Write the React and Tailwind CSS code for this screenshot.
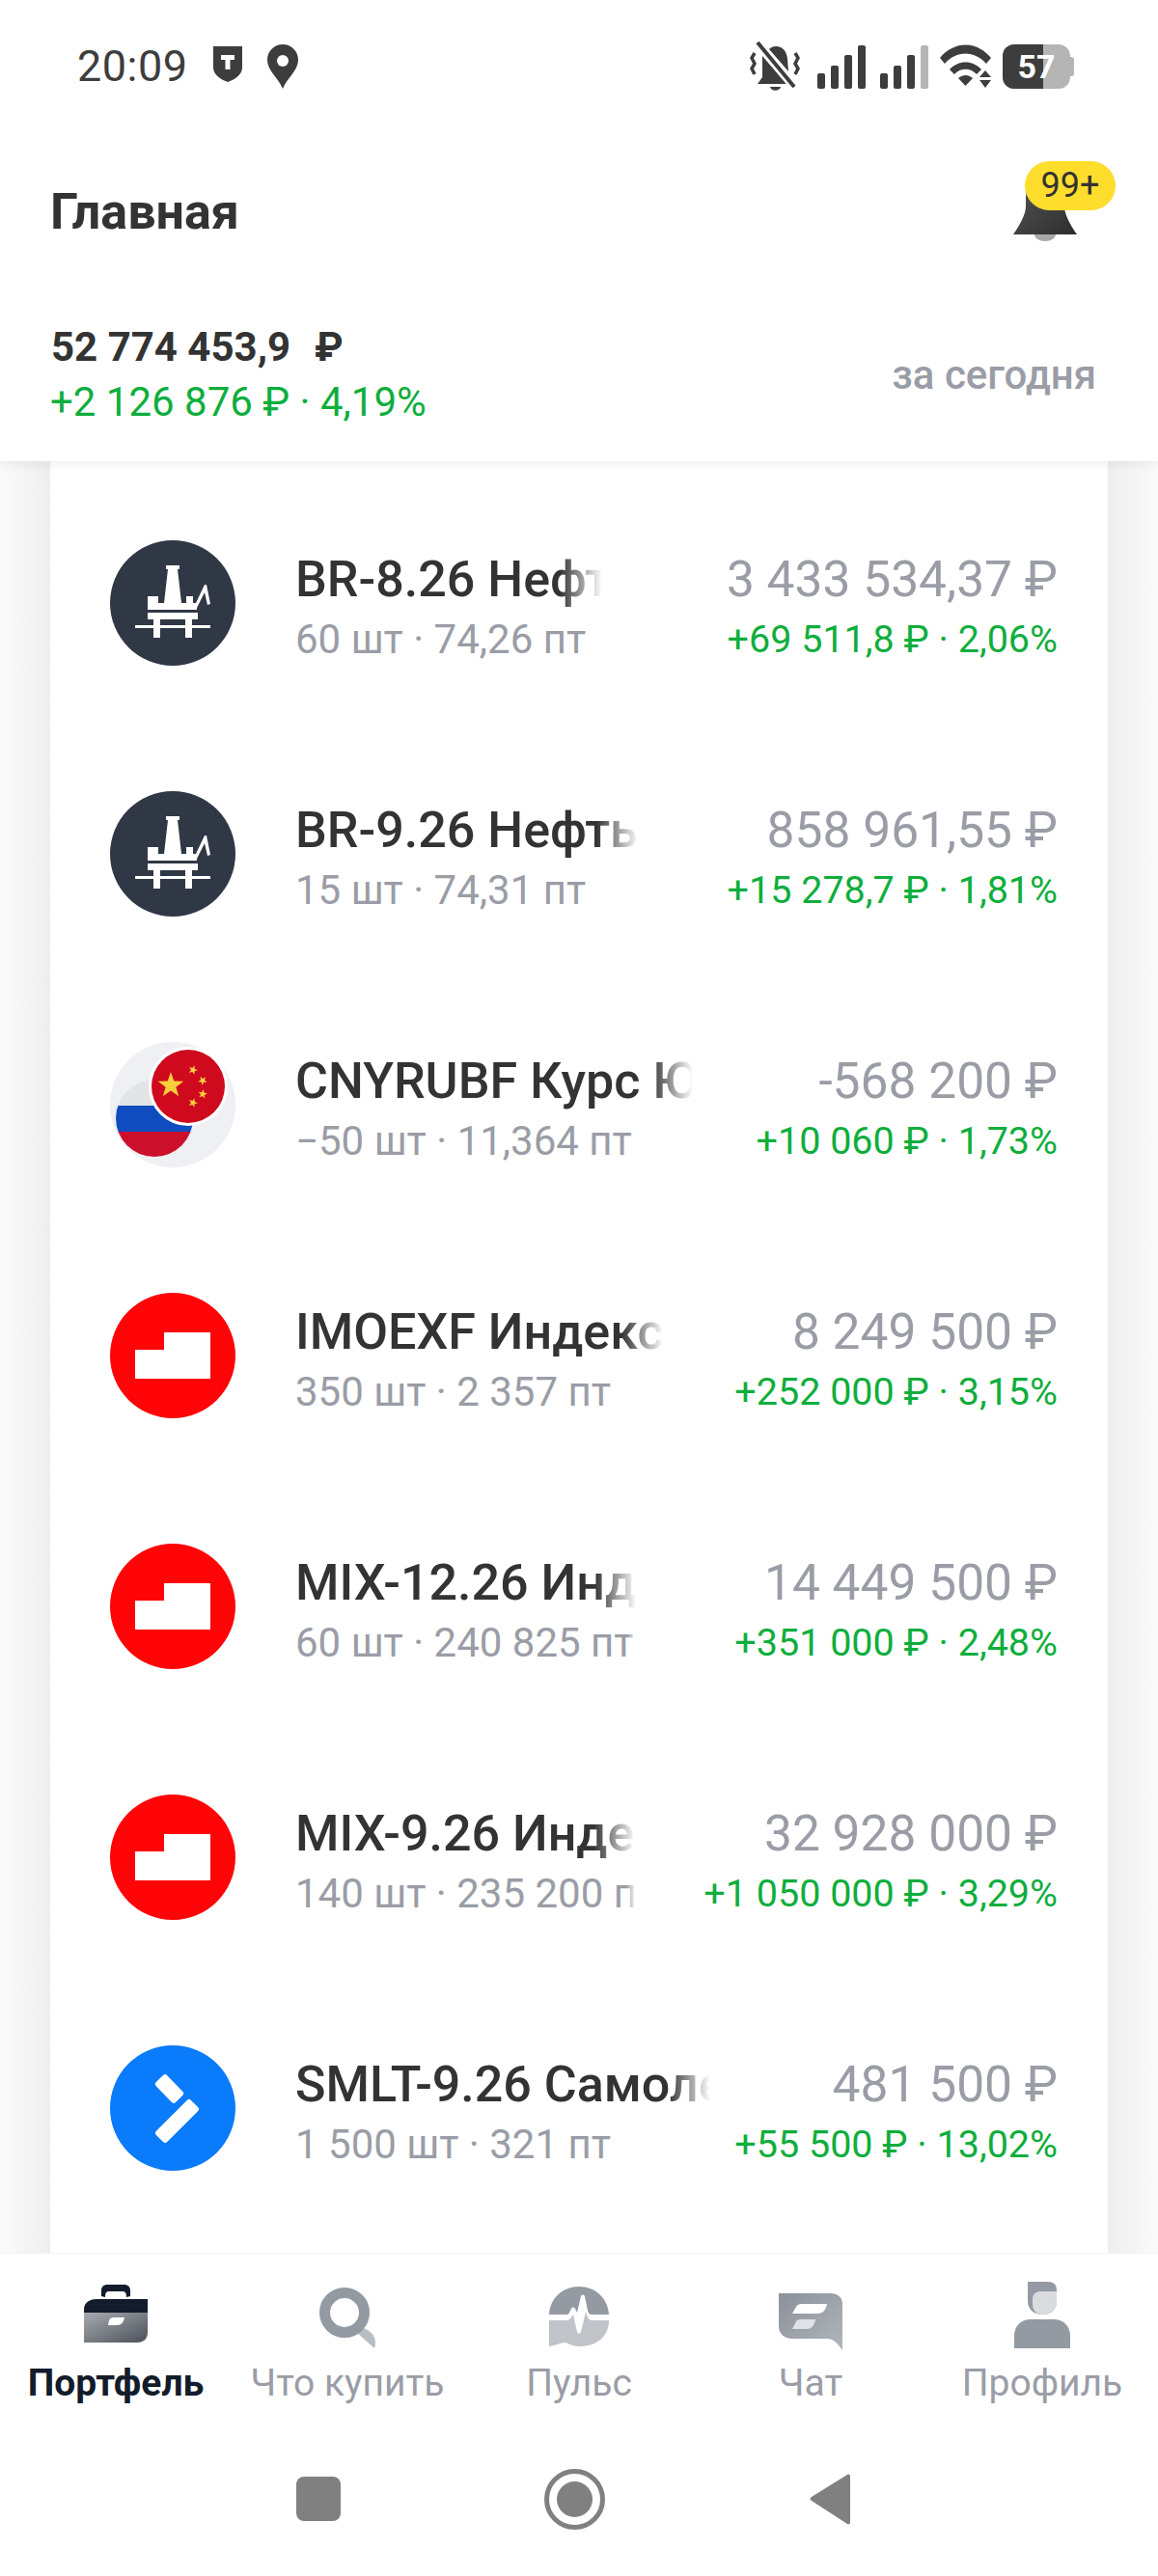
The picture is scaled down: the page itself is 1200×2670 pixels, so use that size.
import React from "react";

const positions = [
  { name: "BR-8.26 Нефть Brent", sub: "60 шт · 74,26 пт", value: "3 433 534,37 ₽", change: "+69 511,8 ₽ · 2,06%", nameW: "w-[318px]", logo: "oil" },
  { name: "BR-9.26 Нефть Brent", sub: "15 шт · 74,31 пт", value: "858 961,55 ₽", change: "+15 278,7 ₽ · 1,81%", nameW: "w-[356px]", logo: "oil" },
  { name: "CNYRUBF Курс Юаня", sub: "−50 шт · 11,364 пт", value: "-568 200 ₽", change: "+10 060 ₽ · 1,73%", nameW: "w-[412px]", logo: "flags" },
  { name: "IMOEXF Индекс МосБиржи", sub: "350 шт · 2 357 пт", value: "8 249 500 ₽", change: "+252 000 ₽ · 3,15%", nameW: "w-[382px]", logo: "moex" },
  { name: "MIX-12.26 Индекс", sub: "60 шт · 240 825 пт", value: "14 449 500 ₽", change: "+351 000 ₽ · 2,48%", nameW: "w-[354px]", logo: "moex" },
  { name: "MIX-9.26 Индекс", sub: "140 шт · 235 200 пт", value: "32 928 000 ₽", change: "+1 050 000 ₽ · 3,29%", nameW: "w-[353px]", logo: "moex" },
  { name: "SMLT-9.26 Самолет", sub: "1 500 шт · 321 пт", value: "481 500 ₽", change: "+55 500 ₽ · 13,02%", nameW: "w-[430px]", logo: "smlt" },
];

function OilLogo() {
  return (
    <svg viewBox="0 0 130 130" className="w-[130px] h-[130px]">
      <circle cx="65" cy="65" r="65" fill="#303846" />
      <path d="M58 26h14v4h-2l4 35h5v-7h7v7h3l9-19 2 0 4 20-3 1-3-13-8 16v2H39V58h11v7h6l4-35h-2z" fill="#fff" />
      <path d="M39 75h52v7H39z" fill="#fff" />
      <path d="M26 88h78v3H26z" fill="#fff" />
      <path d="M45 82h7v19h-7zM78 82h7v19h-7z" fill="#fff" />
    </svg>
  );
}

function Star({ x, y, r, rot = 0 }) {
  const pts = [];
  for (let i = 0; i < 10; i++) {
    const rad = i % 2 === 0 ? r : r * 0.4;
    const a = ((-90 + rot + i * 36) * Math.PI) / 180;
    pts.push(`${(x + rad * Math.cos(a)).toFixed(2)},${(y + rad * Math.sin(a)).toFixed(2)}`);
  }
  return <polygon points={pts.join(" ")} fill="#f7cf3c" />;
}

function FlagsLogo() {
  return (
    <svg viewBox="0 0 130 130" className="w-[130px] h-[130px]">
      <defs>
        <clipPath id="ru">
          <circle cx="46" cy="79" r="40" />
        </clipPath>
      </defs>
      <circle cx="65" cy="65" r="65" fill="#eff0f3" />
      <g clipPath="url(#ru)">
        <rect x="0" y="39" width="100" height="27" fill="#e3e4e6" />
        <rect x="0" y="66" width="100" height="27" fill="#0f4cc0" />
        <rect x="0" y="93" width="100" height="27" fill="#cc0f2b" />
      </g>
      <circle cx="81" cy="46" r="41" fill="#fff" />
      <circle cx="81" cy="46" r="38" fill="#cf0a1e" />
      <Star x={63} y={45} r={14} />
      <Star x={86} y={29} r={5} rot={20} />
      <Star x={96} y={40} r={5} rot={40} />
      <Star x={96} y={54} r={5} rot={10} />
      <Star x={86} y={63} r={5} rot={20} />
    </svg>
  );
}

function MoexLogo() {
  return (
    <svg viewBox="0 0 130 130" className="w-[130px] h-[130px]">
      <circle cx="65" cy="65" r="65" fill="#ff0508" />
      <path d="M26 59h30V41h48v48H26z" fill="#fff" />
    </svg>
  );
}

function SmltLogo() {
  return (
    <svg viewBox="0 0 130 130" className="w-[130px] h-[130px]">
      <circle cx="65" cy="65" r="65" fill="#0a7bfa" />
      <rect x="47" y="37" width="29" height="16" rx="3" transform="rotate(46 61.500 45)" fill="#fff" />
      <rect x="44" y="70.500" width="51" height="16" rx="3" transform="rotate(-45 69.500 78.500)" fill="#fff" />
    </svg>
  );
}

const logos = { oil: OilLogo, flags: FlagsLogo, moex: MoexLogo, smlt: SmltLogo };

function PositionRow({ p }) {
  const Logo = logos[p.logo];
  return (
    <div className="h-[260px] flex items-center pl-[62px] pr-[52px]">
      <Logo />
      <div className={`ml-[62px] pt-[8px] ${p.nameW} overflow-hidden shrink-0`}>
        <div className="relative overflow-hidden">
          <div className="text-[52px] leading-[58px] font-medium text-[#333333] whitespace-nowrap">{p.name}</div>
          <div className="absolute inset-y-0 right-0 w-[44px] bg-gradient-to-r from-white/0 to-white" />
        </div>
        <div className="relative overflow-hidden mt-[9px]">
          <div className="text-[42px] leading-[48px] text-[#9a9da6] whitespace-nowrap">{p.sub}</div>
          <div className="absolute inset-y-0 right-0 w-[10px] bg-gradient-to-r from-white/0 to-white" />
        </div>
      </div>
      <div className="ml-auto pt-[8px] text-right whitespace-nowrap">
        <div className="text-[51.500px] leading-[58px] text-[#9a9da6]">{p.value}</div>
        <div className="text-[39.500px] leading-[48px] mt-[9px] text-[#0fae3c]">{p.change}</div>
      </div>
    </div>
  );
}

function Signal({ className, dim }) {
  return (
    <div className={`flex items-end gap-[6px] h-[46px] ${className}`}>
      <div className="w-[8px] h-[16px] rounded-[2px] bg-[#3d3d3d]" />
      <div className="w-[8px] h-[24px] rounded-[2px] bg-[#3d3d3d]" />
      <div className="w-[8px] h-[35px] rounded-[2px] bg-[#3d3d3d]" />
      <div className={`w-[8px] h-[45px] rounded-[2px] ${dim ? "bg-[#b5b5b5]" : "bg-[#3d3d3d]"}`} />
    </div>
  );
}

function Battery() {
  return (
    <div className="relative ml-[9px] flex items-center">
      <div className="relative w-[70px] h-[46px] rounded-[12px] bg-[#b5b5b5] overflow-hidden">
        <div className="absolute left-0 top-0 bottom-0 w-[42px] bg-[#3d3d3d]" />
      </div>
      <div className="w-[4px] h-[20px] rounded-r-[3px] bg-[#b5b5b5]" />
      <span className="absolute left-0 w-[70px] top-0 text-center text-[34px] leading-[46px] font-bold text-white">57</span>
    </div>
  );
}

function StatusBar() {
  return (
    <div className="h-[140px] flex items-center justify-between pl-[80px] pr-[87px] pb-[2px]">
      <div className="flex items-center">
        <span className="text-[45px] text-[#3d3d3d] tracking-[0.5px]">20:09</span>
        <svg viewBox="0 0 32 44" className="w-[32px] h-[44px] ml-[25px]">
          <path d="M1 1h30v22c0 8-9 13-15 15C10 36 1 31 1 23z" fill="#3d3d3d" />
          <path d="M9 10h14v5h-4.500v10h-5V15H9z" fill="#fff" />
        </svg>
        <svg viewBox="0 0 32 46" className="w-[32px] h-[46px] ml-[25px]">
          <path d="M16 0C7 0 0 7 0 16c0 11 11 18 16 30 5-12 16-19 16-30C32 7 25 0 16 0z" fill="#3d3d3d" />
          <circle cx="16" cy="17" r="6" fill="#fff" />
        </svg>
      </div>
      <div className="flex items-center">
        <svg viewBox="0 0 52 52" className="w-[52px] h-[52px]">
          <path d="M27 5c7 0 11 5 12 13l1 13-20-23c2-2 4-3 7-3zM13 15l25 29H8l5-7z" fill="#3d3d3d" />
          <path d="M21 47h11c-1 5-10 5-11 0z" fill="#3d3d3d" />
          <path d="M6 0l38 46" stroke="#fff" strokeWidth="7" />
          <path d="M8 1l38 46" stroke="#3d3d3d" strokeWidth="4" />
          <path d="M5 12L2 17l3 6-3 5 3 6M47 12l3 5-3 6 3 5-3 6" stroke="#3d3d3d" strokeWidth="3.500" fill="none" />
        </svg>
        <Signal className="ml-[18px]" dim={false} />
        <Signal className="ml-[15px]" dim={true} />
        <svg viewBox="0 0 56 48" className="w-[56px] h-[48px] ml-[12px]">
          <path d="M0 15C15 -3 38 -3 53 15l-5 6C36 7 17 7 5 21z" fill="#3d3d3d" />
          <path d="M10 27c9-10 24-10 33 0l-5 5c-6-7-17-7-23 0z" fill="#3d3d3d" />
          <path d="M19 36c5-4 10-4 15 0l-7.500 8z" fill="#3d3d3d" />
          <path d="M47 28l6 7H41zM47 46l6-8H41z" fill="#3d3d3d" />
        </svg>
        <Battery />
      </div>
    </div>
  );
}

function Header() {
  return (
    <div className="relative z-10 bg-white h-[478px] shadow-[0_2px_12px_rgba(0,0,0,0.08)]">
      <StatusBar />
      <div className="h-[160px] flex items-center justify-between pl-[52px] pr-[84px]">
        <h1 className="text-[52px] leading-[60px] font-bold text-[#333333]">Главная</h1>
        <div className="relative w-[66px] h-[60px]">
          <svg viewBox="0 0 66 60" className="w-[66px] h-[60px]">
            <defs>
              <linearGradient id="bell" x1="0" y1="0" x2="1" y2="1">
                <stop offset="0" stopColor="#555" />
                <stop offset="1" stopColor="#2d2d2d" />
              </linearGradient>
            </defs>
            <path d="M33 0C20 0 13 4 13 14v10c0 8-6 19-13 29h66c-7-10-13-21-13-29V14C53 4 46 0 33 0z" fill="url(#bell)" />
            <path d="M22 53h22v0c0 4-5 7-11 7S22 57 22 53z" fill="#a8a8a8" />
          </svg>
          <span className="absolute left-[12px] top-[-23px] w-[94px] h-[51px] rounded-[26px] bg-[#ffdd2d] text-center text-[36px] leading-[50px] text-[#333333]">99+</span>
        </div>
      </div>
      <div className="flex items-start justify-between pl-[53px] pr-[64px] mt-[32px]">
        <div>
          <div className="text-[42px] leading-[56px] font-bold text-[#333333]">
            52 774 453,9<span className="ml-[25px]">₽</span>
          </div>
          <div className="text-[42px] leading-[58px] -ml-[1px] text-[#0fae3c]">+2 126 876 ₽ · 4,19%</div>
        </div>
        <span className="text-[42px] leading-[56px] font-medium text-[#9a9da6] mt-[29px]">за сегодня</span>
      </div>
    </div>
  );
}

function TabIcon({ type }) {
  if (type === "portfolio")
    return (
      <svg viewBox="0 0 66 60" className="w-[66px] h-[60px] mt-[3px]">
        <defs>
          <linearGradient id="tab-bag" x1="0" y1="0" x2="1" y2="1">
            <stop offset="0" stopColor="#a7abb1" />
            <stop offset="1" stopColor="#4b4f57" />
          </linearGradient>
        </defs>
        <path d="M18 12V6c0-4 3-6 6-6h18c3 0 6 2 6 6v6l-4 1c0-4-1-6-4-6H26c-3 0-4 2-4 6z" fill="#131c2a" />
        <path d="M0 29v-3c0-7 5-11 13-11h53v14z" fill="#131c2a" />
        <path d="M0 29h66v20c0 7-4 11-11 11H0z" fill="url(#tab-bag)" />
        <path d="M26 37c1-2 2-3 5-3h11c-1 5-3 8-8 8h-9z" fill="#fff" />
      </svg>
    );
  if (type === "search")
    return (
      <svg viewBox="0 0 58 63" className="w-[58px] h-[63px] mt-[6px]">
        <path d="M38 46l8-4c10 4 14 12 11 21z" fill="#b9bdc4" />
        <circle cx="26" cy="26" r="20.500" fill="none" stroke="#949aa2" strokeWidth="11" />
      </svg>
    );
  if (type === "pulse")
    return (
      <svg viewBox="0 0 62 62" className="w-[62px] h-[62px] mt-[5px]">
        <path d="M0 29C1 12 14 0 31 0s30 12 31 29H44c-2 0-3-1-4-4l-3-15c-1-2-3-2-4 0l-4 17-2-4c-1-2-3-2-4 0l-2 4c-1 2-2 2-4 2z" fill="#949aa2" />
        <path d="M0 35h18c2 0 4-1 5-3l2-3 4 18c1 2 3 2 4 0l5-21c1 2 2 9 6 9h18c0 17-13 27-31 27-6 0-11-3-14-4-5 0-10 3-17 4z" fill="#c0c3c8" />
      </svg>
    );
  if (type === "chat")
    return (
      <svg viewBox="0 0 66 59" className="w-[66px] h-[59px] mt-[12px]">
        <defs>
          <linearGradient id="tab-chat" x1="0" y1="0" x2="1" y2="1">
            <stop offset="0" stopColor="#8b9099" />
            <stop offset="1" stopColor="#b2b6bc" />
          </linearGradient>
        </defs>
        <path d="M0 0h54c7 0 12 4 12 11v48c-5-6-8-12-17-12H14C6 47 0 42 0 34z" fill="url(#tab-chat)" />
        <path d="M18 14c1-2 3-3 6-3h26c-1 6-4 10-10 10H14z" fill="#fff" />
        <path d="M17 31c1-3 3-4 5-4h16c-1 6-4 10-9 10H14z" fill="#dfe3e8" />
      </svg>
    );
  return (
    <svg viewBox="0 0 58 69" className="w-[58px] h-[69px]">
      <path d="M14 0h20c7 0 10 3 10 9v11c0 9-6 14-15 14-8 0-15-5-15-14z" fill="#949aa2" />
      <path d="M19 18c0-6 4-8 9-8h16v10c0 9-6 14-15 14-6 0-10-5-10-10z" fill="#d9dbde" />
      <path d="M0 69V56c0-10 7-17 17-17h24c10 0 17 7 17 17v13z" fill="#949aa2" />
    </svg>
  );
}

const tabs = [
  { label: "Портфель", icon: "portfolio", active: true },
  { label: "Что купить", icon: "search" },
  { label: "Пульс", icon: "pulse" },
  { label: "Чат", icon: "chat" },
  { label: "Профиль", icon: "profile" },
];

function BottomNav() {
  return (
    <div className="relative z-10 bg-white border-t border-[#f2f2f3]">
      <div className="flex h-[180px]">
        {tabs.map((t) => (
          <div key={t.label} className="w-[240px] flex flex-col items-center">
            <div className="h-[72px] mt-[29px] flex items-start justify-center">
              <TabIcon type={t.icon} />
            </div>
            <span className={`text-[39px] leading-[44px] mt-[11px] whitespace-nowrap ${t.active ? "font-bold text-[#131c2a]" : "text-[#9a9da6]"}`}>
              {t.label}
            </span>
          </div>
        ))}
      </div>
      <div className="h-[154px] flex items-center pl-[307px] pb-[6px]">
        <div className="w-[46px] h-[46px] rounded-[8px] bg-[#808080]" />
        <div className="ml-[211px] w-[63px] h-[63px] rounded-full border-[5px] border-[#808080] flex items-center justify-center">
          <div className="w-[37px] h-[37px] rounded-full bg-[#808080]" />
        </div>
        <svg viewBox="0 0 42 53" className="w-[42px] h-[53px] ml-[212px]">
          <path d="M39 1c2-1 3 0 3 2v47c0 2-1 3-3 2L2 28c-2-1-2-3 0-4z" fill="#808080" />
        </svg>
      </div>
    </div>
  );
}

export default function App() {
  return (
    <div className="w-[1200px] h-[2670px] flex flex-col overflow-hidden bg-white font-['Roboto',sans-serif]">
      <Header />
      <div className="flex-1 min-h-0 flex overflow-hidden">
        <div className="w-[52px] bg-gradient-to-r from-[#fbfbfb] to-[#eeeeee]" />
        <div className="flex-1 bg-white pt-[17px]">
          {positions.map((p) => (
            <PositionRow key={p.name} p={p} />
          ))}
        </div>
        <div className="w-[52px] bg-gradient-to-l from-[#fbfbfb] to-[#eeeeee]" />
      </div>
      <BottomNav />
    </div>
  );
}
